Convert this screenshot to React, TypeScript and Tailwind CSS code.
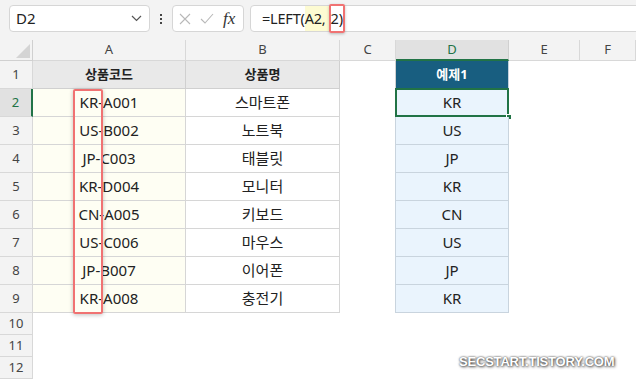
import React from 'react';

const colWidths = 'grid-cols-[33px_153px_154px_56px_113px_71px_56px]';

const data = [
  ['KR-A001', '스마트폰', 'KR'],
  ['US-B002', '노트북', 'US'],
  ['JP-C003', '태블릿', 'JP'],
  ['KR-D004', '모니터', 'KR'],
  ['CN-A005', '키보드', 'CN'],
  ['US-C006', '마우스', 'US'],
  ['JP-B007', '이어폰', 'JP'],
  ['KR-A008', '충전기', 'KR'],
];

const colLetters = ['A', 'B', 'C', 'D', 'E', 'F'];

const FormulaBar = () => (
  <div className="h-[40px] bg-[#f3f3f3] flex items-start pt-[5px] pl-[9px]">
    <div className="w-[141px] h-[27px] bg-white border border-[#d6d6d6] rounded-[4px] flex items-center justify-between pl-[6px] pr-[7px]">
      <span className="text-[15px] text-[#222]">D2</span>
      <svg width="11" height="7" viewBox="0 0 11 7">
        <path d="M1 1 L5.5 5.5 L10 1" fill="none" stroke="#555" strokeWidth="1.2" />
      </svg>
    </div>
    <div className="w-[22px] h-[27px] flex flex-col items-center justify-center gap-[2px]">
      <span className="w-[2px] h-[2px] bg-[#444]" />
      <span className="w-[2px] h-[2px] bg-[#444]" />
      <span className="w-[2px] h-[2px] bg-[#444]" />
    </div>
    <div className="w-[72px] h-[27px] bg-white border border-[#d6d6d6] rounded-[4px] flex items-center pl-[6px] gap-[9px]">
      <svg width="12" height="12" viewBox="0 0 12 12">
        <path d="M1 1 L11 11 M11 1 L1 11" stroke="#b8b8b8" strokeWidth="1.1" />
      </svg>
      <svg width="14" height="11" viewBox="0 0 14 11">
        <path d="M1 6 L5 10 L13 1" fill="none" stroke="#b8b8b8" strokeWidth="1.1" />
      </svg>
      <span className="font-['Liberation_Serif',serif] italic text-[17px] text-[#333] leading-none">fx</span>
    </div>
    <div className="flex-1 ml-[6px] -mr-[4px] h-[27px] bg-white border border-[#d6d6d6] rounded-[4px] flex items-stretch pl-[11px] text-[14.5px] tracking-[-0.2px] text-[#222]">
      <span className="flex items-center">=LEFT(</span>
      <span className="flex items-center bg-[#fdfbd2] pr-[3px]">A2,</span>
      <span className="flex items-center -my-[2px] border-2 border-[#f07272] rounded-[2px] shadow-[0_1px_3px_rgba(0,0,0,0.25)]">2)</span>
    </div>
  </div>
);

const Sheet = () => {
  const cells: React.ReactNode[] = [];

  // column header row
  cells.push(
    <div key="corner" className="h-[21px] bg-[#f3f3f3] border-r border-b border-[#d0d0d0] flex items-end justify-end pr-[2px] pb-[2px]">
      <svg width="14" height="14" viewBox="0 0 14 14">
        <path d="M14 0 L14 14 L0 14 Z" fill="#d4d4d4" />
      </svg>
    </div>
  );
  colLetters.forEach((c) => {
    const active = c === 'D';
    cells.push(
      <div
        key={'h' + c}
        className={
          active
            ? 'h-[21px] bg-[#e1e1e1] border-r border-[#d0d0d0] border-b-2 border-b-[#217346] flex items-center justify-center text-[13px] text-[#217346]'
            : 'h-[21px] bg-[#f3f3f3] border-r border-b border-[#d8d8d8] flex items-center justify-center text-[13px] text-[#444]'
        }
      >
        {c}
      </div>
    );
  });

  // row 1
  cells.push(
    <div key="r1" className="h-[28px] bg-[#f3f3f3] border-r border-b border-[#d8d8d8] flex items-center justify-center text-[13px] text-[#444]">1</div>
  );
  cells.push(
    <div key="a1" className="bg-[#e9e9e9] border-r border-b border-[#d0d0d0] flex items-center justify-center text-[13px] font-bold text-[#222]">상품코드</div>
  );
  cells.push(
    <div key="b1" className="bg-[#e9e9e9] border-r border-b border-[#d0d0d0] flex items-center justify-center text-[13px] font-bold text-[#222]">상품명</div>
  );
  cells.push(<div key="c1" className="border-r border-[#d0d0d0]" />);
  cells.push(
    <div key="d1" className="bg-[#185e80] border-r border-b border-[#c5d2dd] flex items-center justify-center text-[13px] font-bold text-white">예제1</div>
  );
  cells.push(<div key="e1" />);
  cells.push(<div key="f1" />);

  data.forEach((row, i) => {
    const n = i + 2;
    const active = n === 2;
    cells.push(
      <div
        key={'r' + n}
        className={
          active
            ? 'h-[28px] bg-[#e1e1e1] border-r-2 border-r-[#217346] border-b border-b-[#d8d8d8] flex items-center justify-center text-[13px] text-[#217346]'
            : 'h-[28px] bg-[#f3f3f3] border-r border-b border-[#d8d8d8] flex items-center justify-center text-[13px] text-[#444]'
        }
      >
        {n}
      </div>
    );
    cells.push(
      <div key={'a' + n} className="bg-[#fefef3] border-r border-b border-[#d6d6d6] flex items-center justify-center text-[15px] text-[#222]">{row[0]}</div>
    );
    cells.push(
      <div key={'b' + n} className="bg-white border-r border-b border-[#d6d6d6] flex items-center justify-center text-[15px] text-[#222]">{row[1]}</div>
    );
    cells.push(<div key={'c' + n} className="border-r border-[#c9d4de]" />);
    cells.push(
      <div key={'d' + n} className="relative bg-[#eaf4fd] border-r border-b border-[#c9d4de] flex items-center justify-center text-[15px] text-[#222]">
        {row[2]}
        {active && (
          <>
            <div className="absolute -left-[1px] -top-[1px] -right-[1px] -bottom-[1px] border-2 border-[#217346]" />
            <div className="absolute -right-[4px] -bottom-[4px] w-[6px] h-[6px] bg-[#217346] border border-white" />
          </>
        )}
      </div>
    );
    cells.push(<div key={'e' + n} />);
    cells.push(<div key={'f' + n} />);
  });

  [10, 11, 12].forEach((n) => {
    cells.push(
      <div key={'r' + n} className="h-[22px] bg-[#f3f3f3] border-r border-b border-[#d8d8d8] flex items-center justify-center text-[13px] text-[#444]">{n}</div>
    );
    colLetters.forEach((c) => cells.push(<div key={c + n} />));
  });

  return <div className={'grid ' + colWidths}>{cells}</div>;
};

export default function App() {
  return (
    <div className="relative w-[636px] h-[381px] overflow-hidden bg-white font-['Noto_Sans','Noto_Sans_CJK_KR',sans-serif]">
      <FormulaBar />
      <Sheet />
      {/* red highlight around country code */}
      <div className="absolute left-[73px] top-[89px] w-[30px] h-[225px] border-2 border-[#f07272] rounded-[2px] shadow-[0_1px_4px_rgba(0,0,0,0.25)]" />
      <div className="absolute left-[459px] top-[352px] text-[13px] font-bold tracking-[-0.2px] text-white font-['Liberation_Sans',sans-serif] [text-shadow:0_0_2px_#333,1px_1px_3px_#555]">
        SECSTART.TISTORY.COM
      </div>
    </div>
  );
}
